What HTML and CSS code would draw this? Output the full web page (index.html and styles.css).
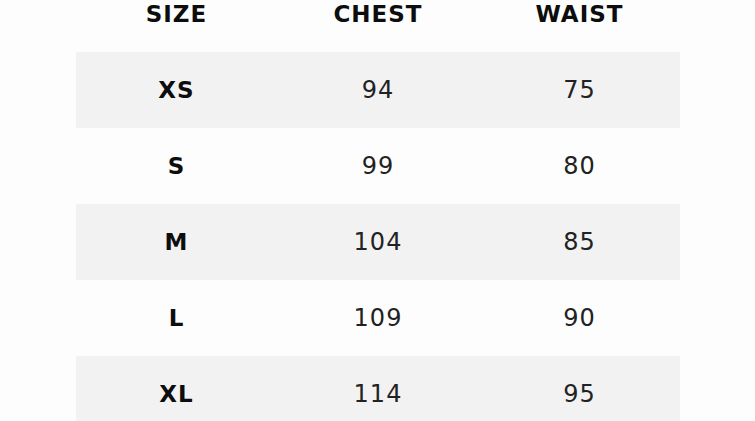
FILE: index.html
```html
<!DOCTYPE html>
<html>
<head>
<meta charset="utf-8">
<link rel="stylesheet" href="styles.css">
</head>
<body>
<div class="chart">
  <div class="row head">
    <div class="cell">SIZE</div>
    <div class="cell">CHEST</div>
    <div class="cell">WAIST</div>
  </div>
  <div class="row shade">
    <div class="cell size">XS</div>
    <div class="cell">94</div>
    <div class="cell">75</div>
  </div>
  <div class="row">
    <div class="cell size">S</div>
    <div class="cell">99</div>
    <div class="cell">80</div>
  </div>
  <div class="row shade">
    <div class="cell size">M</div>
    <div class="cell">104</div>
    <div class="cell">85</div>
  </div>
  <div class="row">
    <div class="cell size">L</div>
    <div class="cell">109</div>
    <div class="cell">90</div>
  </div>
  <div class="row shade">
    <div class="cell size">XL</div>
    <div class="cell">114</div>
    <div class="cell">95</div>
  </div>
</div>
</body>
</html>
```
FILE: styles.css
```css
html, body {
  margin: 0;
  padding: 0;
  background: #fdfdfd;
  overflow: hidden;
}
.chart {
  width: 604px;
  margin-left: 76px;
  font-family: "DejaVu Sans", sans-serif;
  color: #1a1a1a;
}
.row {
  display: grid;
  grid-template-columns: 201px 202px 201px;
  height: 76px;
  align-items: center;
}
.row.head {
  height: 52px;
  align-items: start;
}
.row.head .cell {
  font-weight: bold;
  font-size: 23px;
  line-height: 28px;
  letter-spacing: 1px;
  color: #0d0d0d;
}
.shade {
  background: #f2f2f2;
}
.cell {
  text-align: center;
  font-size: 24px;
  line-height: 28px;
  letter-spacing: 1px;
  color: #222;
}
.cell.size {
  font-weight: bold;
  font-size: 23px;
  letter-spacing: 1px;
  color: #0d0d0d;
}
```
